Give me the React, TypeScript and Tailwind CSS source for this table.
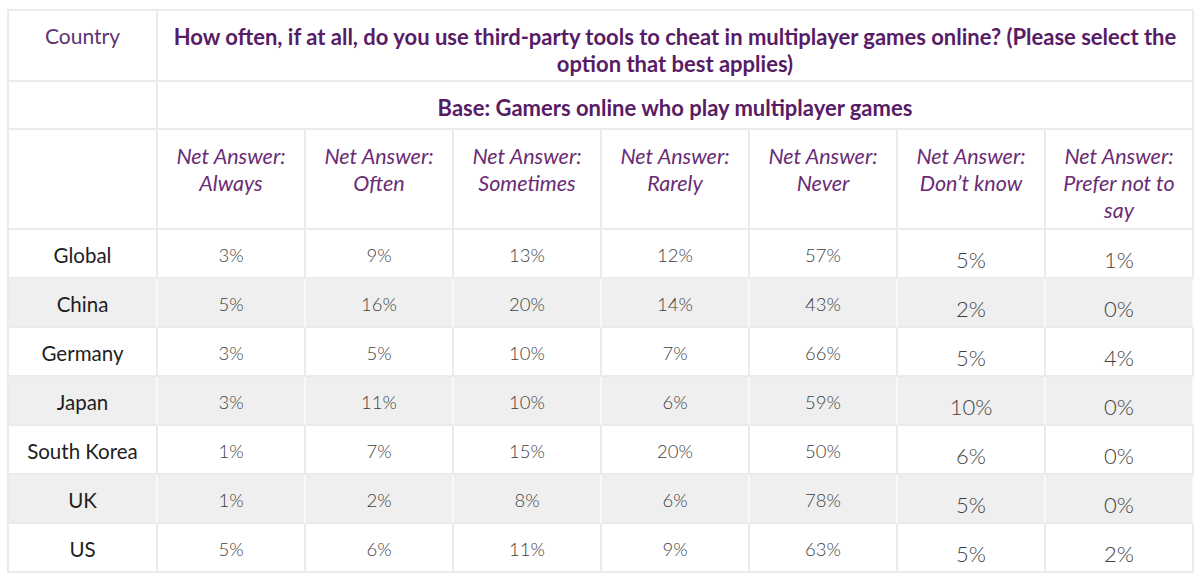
import React from "react";

const answers = ["Always", "Often", "Sometimes", "Rarely", "Never", "Don’t know", "Prefer not to say"];

const rows: { country: string; values: string[] }[] = [
  { country: "Global", values: ["3%", "9%", "13%", "12%", "57%", "5%", "1%"] },
  { country: "China", values: ["5%", "16%", "20%", "14%", "43%", "2%", "0%"] },
  { country: "Germany", values: ["3%", "5%", "10%", "7%", "66%", "5%", "4%"] },
  { country: "Japan", values: ["3%", "11%", "10%", "6%", "59%", "10%", "0%"] },
  { country: "South Korea", values: ["1%", "7%", "15%", "20%", "50%", "6%", "0%"] },
  { country: "UK", values: ["1%", "2%", "8%", "6%", "78%", "5%", "0%"] },
  { country: "US", values: ["5%", "6%", "11%", "9%", "63%", "5%", "2%"] },
];

const font = { fontFamily: "Lato, 'Open Sans', sans-serif" };

export default function App() {
  return (
    <div className="min-h-[577px] w-[1200px] bg-white pl-[7px] pt-[9px]" style={font}>
      <table className="w-[1186px] table-fixed border-separate border-spacing-0 border-l-2 border-t-2 border-[#ebebeb] text-center">
        <colgroup>
          <col className="w-[149px]" />
          {answers.map((a) => (
            <col key={a} className="w-[148px]" />
          ))}
        </colgroup>
        <thead>
          <tr className="h-[71px]">
            <th className="border-b-2 border-r-2 border-[#ebebeb] pt-[11px] align-top text-[21px] font-normal leading-[27px] text-[#5e3370]">
              Country
            </th>
            <th
              colSpan={7}
              className="border-b-2 border-r-2 border-[#ebebeb] px-3 pt-[12px] align-top text-[22px] font-bold leading-[27px] text-[#581c66]"
            >
              How often, if at all, do you use third-party tools to cheat in multiplayer games online? (Please select the option that best applies)
            </th>
          </tr>
          <tr className="h-[48px]">
            <th className="border-b-2 border-r-2 border-[#ebebeb]" />
            <th colSpan={7} className="border-b-2 border-r-2 border-[#ebebeb] pt-[4px] text-[22px] font-bold text-[#581c66]">
              Base: Gamers online who play multiplayer games
            </th>
          </tr>
          <tr className="h-[100px]">
            <th className="border-b-2 border-r-2 border-[#ebebeb]" />
            {answers.map((a) => (
              <th
                key={a}
                className="border-b-2 border-r-2 border-[#ebebeb] px-3 pt-[13px] align-top text-[21.5px] font-normal italic leading-[27px] text-[#6a2c75]"
              >
                Net Answer: {a}
              </th>
            ))}
          </tr>
        </thead>
        <tbody>
          {rows.map((r, i) => {
            const grey = i % 2 === 1;
            const cell = grey
              ? "border-b-2 border-r-2 border-b-[#ebebeb] border-r-[#f9f9f9] bg-[#efefef]"
              : "border-b-2 border-r-2 border-[#ebebeb] bg-white";
            return (
              <tr key={r.country} className="h-[49px]">
                <td className={`${cell} pt-[4px] text-[20.5px] text-[#1e1e1e]`}>{r.country}</td>
                {r.values.map((v, j) => (
                  <td
                    key={j}
                    className={`${cell} font-light text-[#3f3f3f] ${j >= 5 ? "pt-[12px] text-[22px]" : "pt-[4px] text-[18.5px]"}`}
                  >
                    {v}
                  </td>
                ))}
              </tr>
            );
          })}
        </tbody>
      </table>
    </div>
  );
}
